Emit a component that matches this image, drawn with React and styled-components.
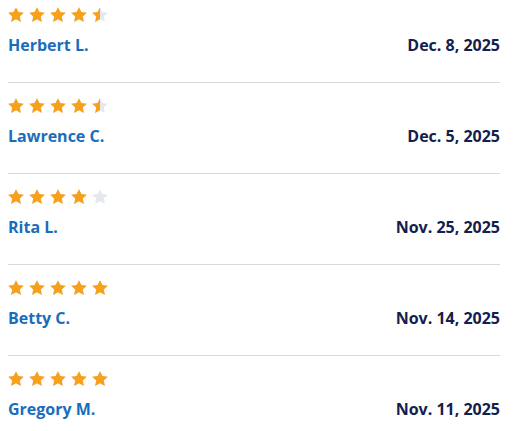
import React from 'react';
import styled, { createGlobalStyle } from 'styled-components';

const GlobalStyle = createGlobalStyle`
  body {
    margin: 0;
    background: #ffffff;
    font-family: "Open Sans", "Liberation Sans", sans-serif;
  }
`;

const List = styled.div`
  padding: 0 17px 0 8px;
`;

const Review = styled.div`
  padding: 15px 0 27px;
  border-top: 1px solid #d6d8dc;

  &:first-child {
    padding-top: 7px;
    border-top: none;
  }
`;

const Stars = styled.div`
  display: flex;
  gap: 5px;
  height: 16px;
  margin-bottom: 12px;
`;

const Meta = styled.div`
  display: flex;
  justify-content: space-between;
  align-items: baseline;
  line-height: 20px;
  font-size: 16px;
  font-weight: 700;
`;

const Name = styled.span`
  color: #1a6dba;
`;

const ReviewDate = styled.span`
  color: #13204d;
`;

const STAR = '8,0.2 10.4,5.1 15.8,5.8 11.8,9.5 12.9,15 8,12.3 3.1,15 4.2,9.5 0.2,5.8 5.6,5.1';

const Star = ({ fill, id }) => (
  <svg width="16" height="16" viewBox="0 0 16 16">
    <defs>
      <clipPath id={id}>
        <rect x="0" y="0" width={16 * fill} height="16" />
      </clipPath>
    </defs>
    <polygon points={STAR} fill="#e5e9ef" />
    <polygon points={STAR} fill="#f7a01c" clipPath={`url(#${id})`} />
  </svg>
);

const reviews = [
  { name: 'Herbert L.', date: 'Dec. 8, 2025', rating: 4.5 },
  { name: 'Lawrence C.', date: 'Dec. 5, 2025', rating: 4.5 },
  { name: 'Rita L.', date: 'Nov. 25, 2025', rating: 4 },
  { name: 'Betty C.', date: 'Nov. 14, 2025', rating: 5 },
  { name: 'Gregory M.', date: 'Nov. 11, 2025', rating: 5 },
];

const App = () => (
  <List>
    <GlobalStyle />
    {reviews.map((r, i) => (
      <Review key={i}>
        <Stars>
          {[0, 1, 2, 3, 4].map((s) => (
            <Star key={s} id={`c${i}-${s}`} fill={Math.max(0, Math.min(1, r.rating - s))} />
          ))}
        </Stars>
        <Meta>
          <Name>{r.name}</Name>
          <ReviewDate>{r.date}</ReviewDate>
        </Meta>
      </Review>
    ))}
  </List>
);

export default App;
